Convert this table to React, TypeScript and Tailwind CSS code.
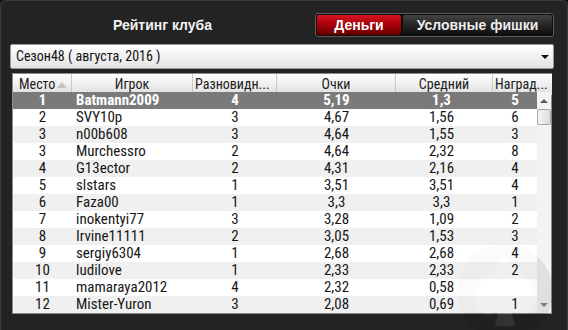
const rows = [
  ['1', 'Batmann2009', '4', '5,19', '1,3', '5'],
  ['2', 'SVY10p', '3', '4,67', '1,56', '6'],
  ['3', 'n00b608', '3', '4,64', '1,55', '3'],
  ['3', 'Murchessro', '2', '4,64', '2,32', '8'],
  ['4', 'G13ector', '2', '4,31', '2,16', '4'],
  ['5', 'slstars', '1', '3,51', '3,51', '4'],
  ['6', 'Faza00', '1', '3,3', '3,3', '1'],
  ['7', 'inokentyi77', '3', '3,28', '1,09', '2'],
  ['8', 'Irvine11111', '2', '3,05', '1,53', '3'],
  ['9', 'sergiy6304', '1', '2,68', '2,68', '4'],
  ['10', 'ludilove', '1', '2,33', '2,33', '2'],
  ['11', 'mamaraya2012', '4', '2,32', '0,58', ''],
  ['12', 'Mister-Yuron', '3', '2,08', '0,69', '1']
]

const narrow = "font-['Roboto_Condensed','Liberation_Sans_Narrow','Arial_Narrow','DejaVu_Sans_Condensed',sans-serif]"

function HeaderCell({ children, className = '' }: { children: React.ReactNode; className?: string }) {
  return (
    <div className={`flex h-full items-center border-r border-[#c9c9c9] bg-linear-to-b from-[#ffffff] to-[#dedede] px-[2px] text-[14px] text-[#1c1c1c] ${className}`}>
      {children}
    </div>
  )
}

function Spade() {
  return (
    <svg className="pointer-events-none absolute left-[442px] top-[150px] opacity-[0.07]" width="100" height="100" viewBox="0 0 100 100">
      <circle cx="50" cy="50" r="48" fill="#000" />
      <path d="M50 14 C62 32 80 40 80 58 C80 70 68 76 56 68 L60 84 L40 84 L44 68 C32 76 20 70 20 58 C20 40 38 32 50 14 Z" fill="#fff" />
    </svg>
  )
}

export default function App() {
  return (
    <div className="h-[330px] w-[568px] overflow-hidden bg-[#141414] font-['Liberation_Sans',sans-serif]">
      <div className="h-[330px] rounded-t-[6px] border-x border-t border-[#3b3b3b] bg-[#232323] pl-[9px] pr-[13px]">
        <div className="flex h-[43px]">
          <div className="mt-[12px] flex h-[24px] flex-1 items-center justify-center text-[14px] font-bold text-[#f2f2f2]">
            Рейтинг клуба
          </div>
          <div className="mt-[12px] flex h-[24px] w-[239px] gap-[2px] rounded-[3px] border border-[#5c5c5c] bg-[#0c0c0c] p-[1px]">
            <div className="flex w-[84px] items-center justify-center rounded-[2px] bg-linear-to-b from-[#d81420] via-[#a4000a] to-[#640000] text-[14px] font-bold text-white">
              Деньги
            </div>
            <div className="flex flex-1 items-center justify-center rounded-[2px] bg-linear-to-b from-[#444444] via-[#262626] to-[#0e0e0e] text-[14px] font-bold text-[#ececec]">
              Условные фишки
            </div>
          </div>
        </div>

        <div className={`flex h-[25px] items-center justify-between rounded-[2px] border border-[#9a9a9a] bg-linear-to-b from-[#ffffff] to-[#e2e2e2] pl-[5px] pr-[4px] ${narrow} text-[14px] text-[#111]`}>
          <span>Сезон48 ( августа, 2016 )</span>
          <span className="h-0 w-0 border-x-[4px] border-t-[4px] border-x-transparent border-t-[#111]" />
        </div>

        <div className={`relative mx-[2px] mt-[4px] border border-[#8c8c8c] bg-white ${narrow}`}>
          <div className="grid h-[18px] grid-cols-[59px_121px_84px_119px_97px_59px] border-b border-[#b5b5b5]">
            <HeaderCell className="gap-[2px] pl-[6px]">
              Место
              <span className="h-0 w-0 border-x-[5px] border-b-[6px] border-x-transparent border-b-[#c4c4c4]" />
            </HeaderCell>
            <HeaderCell className="justify-center">Игрок</HeaderCell>
            <HeaderCell>Разновидн...</HeaderCell>
            <HeaderCell className="justify-center">Очки</HeaderCell>
            <HeaderCell className="justify-center">Средний</HeaderCell>
            <HeaderCell className="border-r-0">Наград...</HeaderCell>
          </div>

          <div className="relative flex">
            <Spade />
            <div className="relative w-[524px]">
              {rows.map((row, i) => (
                <div
                  key={i}
                  className={`grid h-[17px] grid-cols-[59px_121px_84px_119px_97px_44px] items-center text-[15px] leading-[17px] ${
                    i === 0 ? 'bg-[#7a7a7a] font-bold text-white' : i % 2 === 1 ? 'bg-white/80 text-[#161616]' : 'bg-[#ececec]/80 text-[#161616]'
                  }`}
                >
                  <div className="text-center">{row[0]}</div>
                  <div className="pl-[4px]">{row[1]}</div>
                  <div className="text-center">{row[2]}</div>
                  <div className="text-center">{row[3]}</div>
                  <div className="pr-[6px] text-center">{row[4]}</div>
                  <div className="text-center">{row[5]}</div>
                </div>
              ))}
            </div>
            <div className="flex w-[15px] flex-col items-center bg-[#f3f3f3]">
              <div className="flex h-[17px] items-center">
                <span className="h-0 w-0 border-x-[4px] border-b-[4px] border-x-transparent border-b-[#5a5a5a]" />
              </div>
              <div className="h-[16px] w-[14px] rounded-[2px] border border-[#a8a8a8] bg-linear-to-r from-[#f4f4f4] to-[#dcdcdc]" />
              <div className="flex-1" />
              <div className="flex h-[17px] items-center">
                <span className="h-0 w-0 border-x-[4px] border-t-[4px] border-x-transparent border-t-[#8a8a8a]" />
              </div>
            </div>
          </div>
        </div>
      </div>
    </div>
  )
}
